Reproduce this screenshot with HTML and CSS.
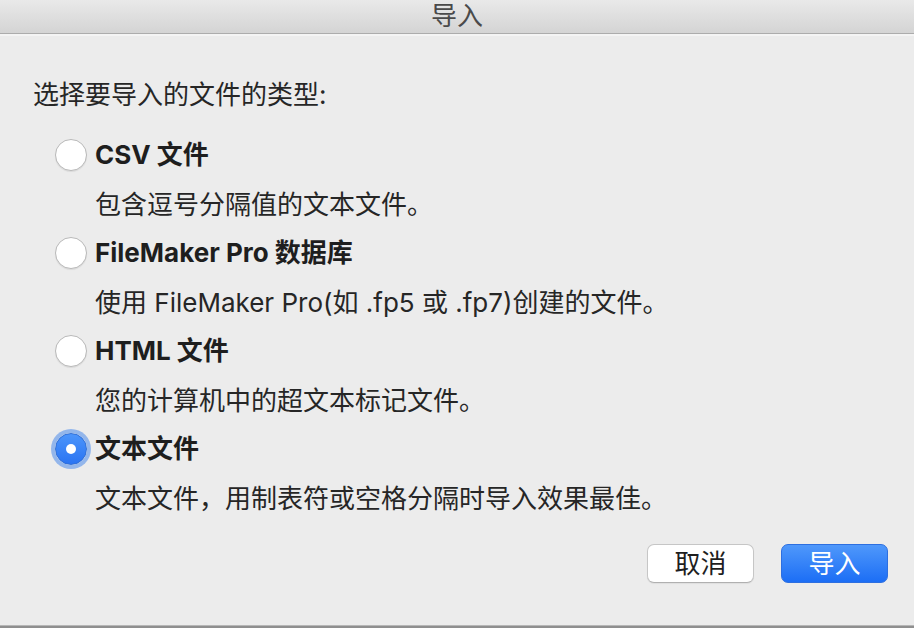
FILE: index.html
```html
<!DOCTYPE html>
<html lang="zh-CN">
<head>
<meta charset="utf-8">
<title>导入</title>
<link rel="stylesheet" href="styles.css">
</head>
<body>
<div class="window">
  <div class="titlebar">导入</div>
  <div class="content">
    <div class="heading">选择要导入的文件的类型:</div>
    <div class="options">
      <div class="option">
        <div class="label-row"><span class="radio"></span><span class="label">CSV 文件</span></div>
        <div class="desc">包含逗号分隔值的文本文件。</div>
      </div>
      <div class="option">
        <div class="label-row"><span class="radio"></span><span class="label">FileMaker Pro 数据库</span></div>
        <div class="desc">使用 FileMaker Pro(如 .fp5 或 .fp7)创建的文件。</div>
      </div>
      <div class="option">
        <div class="label-row"><span class="radio"></span><span class="label">HTML 文件</span></div>
        <div class="desc">您的计算机中的超文本标记文件。</div>
      </div>
      <div class="option">
        <div class="label-row"><span class="radio checked"></span><span class="label">文本文件</span></div>
        <div class="desc">文本文件，用制表符或空格分隔时导入效果最佳。</div>
      </div>
    </div>
    <div class="buttons">
      <button class="btn cancel">取消</button>
      <button class="btn primary">导入</button>
    </div>
  </div>
  <div class="bottom-edge"></div>
</div>
</body>
</html>
```
FILE: styles.css
```css
html, body {
  margin: 0;
  padding: 0;
}
body {
  width: 914px;
  height: 628px;
  overflow: hidden;
  background: #ececec;
  font-family: Inter, "Noto Sans CJK SC", sans-serif;
  color: #262626;
}
.window {
  width: 914px;
  height: 628px;
  display: flex;
  flex-direction: column;
}
.titlebar {
  height: 33px;
  line-height: 32px;
  text-align: center;
  font-size: 26px;
  color: #4a4a4a;
  background: linear-gradient(#e9e9e9, #d4d4d4);
  border-bottom: 1px solid #acacac;
  box-shadow: 0 2px 0 #f4f4f4;
  flex: none;
}
.content {
  flex: 1;
  padding: 43px 26px 0 33px;
  display: flex;
  flex-direction: column;
}
.heading {
  font-size: 26px;
  line-height: 36px;
}
.options {
  margin-top: 24px;
  padding-left: 22px;
  display: flex;
  flex-direction: column;
  gap: 12px;
}
.option {
  display: flex;
  flex-direction: column;
  gap: 14px;
}
.label-row {
  display: flex;
  align-items: center;
  height: 36px;
  gap: 8px;
}
.label {
  font-size: 26px;
  font-weight: 700;
  line-height: 36px;
  color: #1e1e1e;
}
.desc {
  font-size: 26px;
  line-height: 36px;
  padding-left: 40px;
}
.radio {
  width: 30px;
  height: 30px;
  border-radius: 50%;
  background: #ffffff;
  border: 1px solid #b9b9b9;
  box-shadow: 0 1px 1px rgba(0,0,0,0.08);
  flex: none;
  position: relative;
}
.radio.checked {
  background: linear-gradient(#4c95fb, #2a74f2);
  border-color: #2f6fd8;
  box-shadow: 0 0 0 4px rgba(100, 154, 235, 0.65);
}
.radio.checked::after {
  content: "";
  position: absolute;
  left: 10px;
  top: 10px;
  width: 10px;
  height: 10px;
  border-radius: 50%;
  background: #ffffff;
}
.buttons {
  margin-top: 27px;
  display: flex;
  justify-content: flex-end;
  gap: 27px;
}
.btn {
  width: 107px;
  height: 39px;
  border-radius: 7px;
  font-family: Inter, "Noto Sans CJK SC", sans-serif;
  font-size: 26px;
  line-height: 36px;
  padding: 0;
}
.cancel {
  background: #ffffff;
  color: #1e1e1e;
  border: 1px solid #c6c6c6;
  border-bottom-color: #b0b0b0;
  box-shadow: 0 1px 1px rgba(0,0,0,0.06);
}
.primary {
  background: linear-gradient(#4f98fb, #1c6ef5);
  color: #ffffff;
  border: 1px solid #2d6fe0;
}
.bottom-edge {
  flex: none;
  height: 2px;
  background: #8f8f8f;
  border-top: 1px solid #b6b6b6;
}
```
